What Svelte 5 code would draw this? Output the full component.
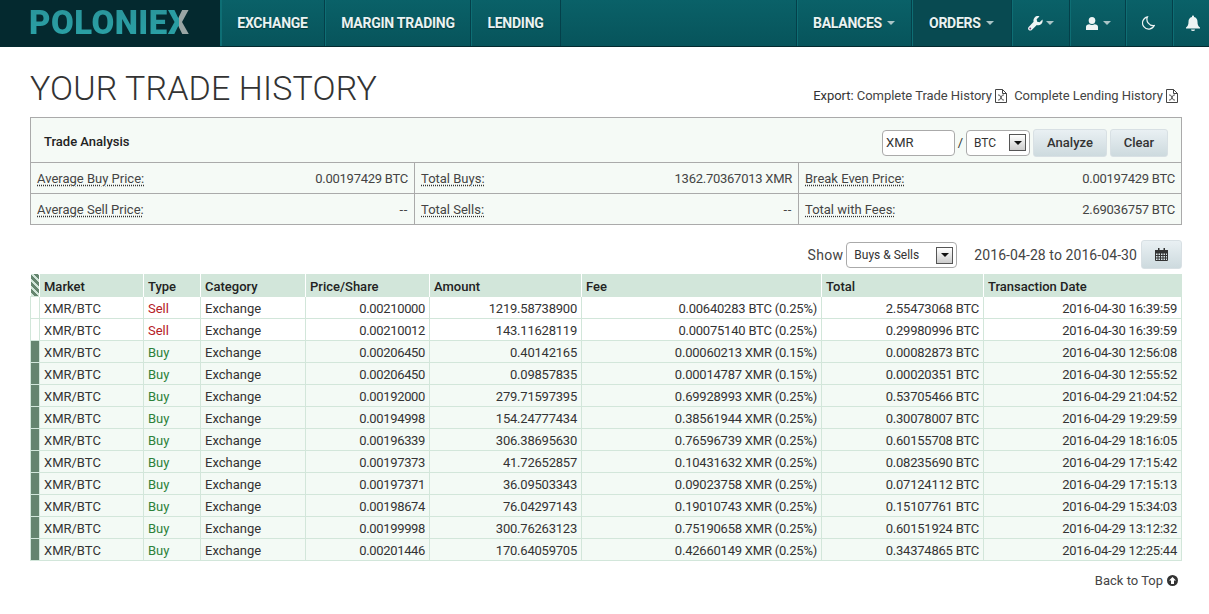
<script>
  const rows = [
    ['Sell','0.00210000','1219.58738900','0.00640283 BTC (0.25%)','2.55473068 BTC','2016-04-30 16:39:59'],
    ['Sell','0.00210012','143.11628119','0.00075140 BTC (0.25%)','0.29980996 BTC','2016-04-30 16:39:59'],
    ['Buy','0.00206450','0.40142165','0.00060213 XMR (0.15%)','0.00082873 BTC','2016-04-30 12:56:08'],
    ['Buy','0.00206450','0.09857835','0.00014787 XMR (0.15%)','0.00020351 BTC','2016-04-30 12:55:52'],
    ['Buy','0.00192000','279.71597395','0.69928993 XMR (0.25%)','0.53705466 BTC','2016-04-29 21:04:52'],
    ['Buy','0.00194998','154.24777434','0.38561944 XMR (0.25%)','0.30078007 BTC','2016-04-29 19:29:59'],
    ['Buy','0.00196339','306.38695630','0.76596739 XMR (0.25%)','0.60155708 BTC','2016-04-29 18:16:05'],
    ['Buy','0.00197373','41.72652857','0.10431632 XMR (0.25%)','0.08235690 BTC','2016-04-29 17:15:42'],
    ['Buy','0.00197371','36.09503343','0.09023758 XMR (0.25%)','0.07124112 BTC','2016-04-29 17:15:13'],
    ['Buy','0.00198674','76.04297143','0.19010743 XMR (0.25%)','0.15107761 BTC','2016-04-29 15:34:03'],
    ['Buy','0.00199998','300.76263123','0.75190658 XMR (0.25%)','0.60151924 BTC','2016-04-29 13:12:32'],
    ['Buy','0.00201446','170.64059705','0.42660149 XMR (0.25%)','0.34374865 BTC','2016-04-29 12:25:44'],
  ];
</script>

{#snippet xls()}
  <svg class="xls" width="12" height="14" viewBox="0 0 12 14"><path d="M.5.500h7l4 4v9H.5z M7.500.500v4h4" fill="#fff" stroke="#444"/><path d="M3 6h1.500l3 5H9M9 6H7.500l-3 5H3" stroke="#444" stroke-width=".9" fill="none"/></svg>
{/snippet}
{#snippet caret()}<i class="caret"></i>{/snippet}
{#snippet arrow()}<span class="arrow"><i></i></span>{/snippet}

<header class="nav">
  <div class="logo"><span class="word">POLONIE</span><span class="x">X</span></div>
  <nav class="group">
    <a href="#e" class="l1">EXCHANGE</a>
    <a href="#m" class="l2">MARGIN TRADING</a>
    <a href="#l" class="l3">LENDING</a>
  </nav>
  <nav class="group right">
    <a href="#b" class="bal">BALANCES {@render caret()}</a>
    <a href="#o" class="ord active">ORDERS {@render caret()}</a>
    <a href="#w" class="ico w1">
      <svg width="15" height="15" viewBox="0 0 16 16"><path d="M15.400 3.600l-3 3-2.600-.6-.6-2.600 3-3c-1.800-.6-3.800-.2-5.100 1.100-1.300 1.300-1.600 3.100-1.100 4.700L.7 11.600c-.9.900-.9 2.400 0 3.300s2.400.9 3.300 0L9.400 9.600c1.600.5 3.400.2 4.800-1.100 1.300-1.300 1.700-3.200 1.200-4.900z" fill="#eef4f4"/><circle cx="2.400" cy="13.300" r="1" fill="#7a3f7a"/></svg>
      {@render caret()}
    </a>
    <a href="#u" class="ico w2">
      <svg width="12" height="13" viewBox="0 0 12 13"><ellipse cx="6" cy="3.500" rx="3.300" ry="3.500" fill="#eef4f4"/><path d="M0 13V9.800C0 8.300 1.500 7.500 3.300 7.300c1.600.8 3.800.8 5.400 0C10.500 7.500 12 8.300 12 9.800V13z" fill="#eef4f4"/></svg>
      {@render caret()}
    </a>
    <a href="#n" class="ico w3">
      <svg width="13" height="14" viewBox="0 0 13 14"><path d="M5.500.8A6.200 6.200 0 1 0 12.300 9.600 6.300 6.300 0 0 1 5.500.8z" fill="none" stroke="#eef4f4" stroke-width="1.200"/></svg>
    </a>
    <a href="#a" class="ico w4">
      <svg width="14" height="16" viewBox="0 0 14 15"><path d="M7 0c.6 0 1 .4 1 1v.5c2.300.5 3.500 2.300 3.500 4.700 0 3 .7 4.300 2.500 5.800v1H0v-1c1.800-1.500 2.500-2.800 2.500-5.800C2.500 3.800 3.700 2 6 1.500V1c0-.6.400-1 1-1z" fill="#eef4f4"/><path d="M5 14a2 1.500 0 0 0 4 0z" fill="#eef4f4"/></svg>
    </a>
  </nav>
</header>

<main>
  <div class="head">
    <h1>YOUR TRADE HISTORY</h1>
    <div class="export">Export: <a href="#t">Complete Trade History</a> {@render xls()}<a class="second" href="#c">Complete Lending History</a> {@render xls()}</div>
  </div>

  <section class="panel">
    <div class="ptitle">
      <strong>Trade Analysis</strong>
      <div class="controls">
        <span class="input">XMR</span>
        <span class="slash">/</span>
        <span class="select s1">BTC{@render arrow()}</span>
        <button class="btn analyze">Analyze</button>
        <button class="btn clear">Clear</button>
      </div>
    </div>
    <div class="stats">
      <div class="stat"><u>Average Buy Price:</u><span>0.00197429 BTC</span></div>
      <div class="stat"><u>Total Buys:</u><span>1362.70367013 XMR</span></div>
      <div class="stat"><u>Break Even Price:</u><span>0.00197429 BTC</span></div>
      <div class="stat"><u>Average Sell Price:</u><span class="dash">--</span></div>
      <div class="stat"><u>Total Sells:</u><span class="dash">--</span></div>
      <div class="stat"><u>Total with Fees:</u><span>2.69036757 BTC</span></div>
    </div>
  </section>

  <div class="filter">
    <span class="show">Show</span>
    <span class="select s2">Buys &amp; Sells{@render arrow()}</span>
    <span class="range">2016-04-28 to 2016-04-30</span>
    <button class="btn cal" aria-label="Pick dates">
      <svg width="13" height="13" viewBox="0 0 13 13"><path d="M.5 2.500h12v10H.5zM.5 5h12M.5 7.500h12M.5 10h12M3 2.500v10M5.500 2.500v10M8 2.500v10M10.500 2.500v10" fill="none" stroke="#333"/><path d="M3 0h1.500v3H3zM8.500 0H10v3H8.500zM0 2h13v3H0z" fill="#333"/></svg>
    </button>
  </div>

  <table>
    <colgroup>
      <col class="c0"/><col class="c1"/><col class="c2"/><col class="c3"/><col class="c4"/><col class="c5"/><col class="c6"/><col class="c7"/><col class="c8"/>
    </colgroup>
    <thead>
      <tr>
        <th class="stripe"></th><th>Market</th><th>Type</th><th>Category</th><th>Price/Share</th><th>Amount</th><th>Fee</th><th>Total</th><th>Transaction Date</th>
      </tr>
    </thead>
    <tbody>
      {#each rows as r}
        <tr class={r[0] === 'Buy' ? 'buy' : 'sell'}>
          <td class="mark"></td>
          <td>XMR/BTC</td>
          <td class="type">{r[0]}</td>
          <td>Exchange</td>
          <td class="num tight">{r[1]}</td>
          <td class="num">{r[2]}</td>
          <td class="num">{r[3]}</td>
          <td class="num">{r[4]}</td>
          <td class="num">{r[5]}</td>
        </tr>
      {/each}
    </tbody>
  </table>

  <div class="top">
    <a href="#top">Back to Top</a>
    <svg width="11" height="11" viewBox="0 0 11 11"><circle cx="5.500" cy="5.500" r="5.500" fill="#333"/><path d="M5.500 2L9 5.600H7V9H4V5.600H2z" fill="#fff"/></svg>
  </div>
</main>

<style>
  :global(body) { margin: 0; background: #fff; font-family: Roboto, "Liberation Sans", sans-serif; color: #333; }
  a { color: inherit; text-decoration: none; }
  .nav { display: flex; justify-content: space-between; height: 46px; border-bottom: 1px solid #032a2f; background: linear-gradient(#0a6168, #07545b); }
  .logo { box-sizing: border-box; width: 221px; padding-left: 29px; flex: none; background: #04292f; font: 900 33px/45px Roboto, sans-serif; letter-spacing: 0.45px; border-right: 1px solid #0e6e74; white-space: nowrap; }
  .logo .word { background: linear-gradient(#2a9399, #2aa3a8); -webkit-background-clip: text; background-clip: text; color: transparent; }
  .logo .x { background: linear-gradient(90deg, #2a9da3 52%, #9aa5a5 52%); -webkit-background-clip: text; background-clip: text; color: transparent; }
  .group { display: flex; margin-right: auto; }
  .group.right { margin-right: 0; border-left: 1px solid #04404a; }
  .group a { display: flex; align-items: center; justify-content: center; box-sizing: border-box; padding: 0; height: 46px; font-size: 14px; font-weight: 700; letter-spacing: -0.25px; color: #eaf2f2; border-right: 1px solid #04404a; box-shadow: inset 1px 0 0 #0e6e74; text-shadow: 0 1px 1px #033; gap: 5px; white-space: nowrap; }
  .group .l1 { width: 104px; }
  .group .l2 { width: 146px; padding-left: 1px; }
  .group .l3 { width: 90px; }
  .group .bal { width: 115px; padding-left: 16px; justify-content: flex-start; }
  .group .ord { width: 100px; padding-left: 17px; justify-content: flex-start; }
  .active { background: #084a51; }
  .group .w1 { width: 58px; padding: 0 0 0 1px; gap: 3px; }
  .group .w2 { width: 56px; padding: 0 0 0 2px; }
  .group .w3 { width: 47px; padding: 0 1px 0 0; }
  .group .w4 { width: 36px; padding: 0 0 0 4px; border-right: 0; }
  .caret { display: inline-block; width: 0; height: 0; border: 4.5px solid transparent; border-top-color: #a9c4c6; border-bottom: 0; }
  main { padding: 0 27px 0 30px; }
  .head { display: flex; justify-content: space-between; align-items: flex-end; height: 70px; }
  h1 { margin: 0 0 8px; font-size: 34px; letter-spacing: 0.12px; line-height: 42px; font-weight: 300; color: #333; }
  .export { font-size: 13px; line-height: 15px; margin-bottom: 14px; color: #333; margin-right: 4px; white-space: nowrap; letter-spacing: -0.04px; }
  .export a { color: #444; }
  .export .second { margin-left: 7px; }
  .xls { vertical-align: -3px; }
  .panel { border: 1px solid #aaa; background: #f5faf6; font-size: 13px; }
  .ptitle { display: flex; justify-content: space-between; align-items: center; box-sizing: border-box; height: 45px; padding: 3px 13px 0; border-bottom: 1px solid #aaa; }
  .ptitle strong { font-weight: 500; font-size: 13px; color: #222; }
  .controls { display: flex; align-items: center; margin-top: 2px; }
  .input { box-sizing: border-box; width: 73px; height: 26px; line-height: 24px; padding-left: 3px; border: 1px solid #aaa; border-radius: 4px; background: #fff; color: #333; font-size: 13px; }
  .slash { width: 11px; text-align: center; }
  .select { display: flex; justify-content: space-between; align-items: center; box-sizing: border-box; height: 26px; border: 1px solid #aaa; border-radius: 4px; background: #fff; padding: 0 3px 0 7px; font-size: 12px; color: #333; }
  .s1 { width: 64px; margin-right: 3px; }
  .s2 { width: 111px; margin-top: 1px; }
  .arrow { box-sizing: border-box; display: flex; align-items: center; justify-content: center; width: 17px; height: 17px; border: 1px solid #555; background: linear-gradient(#fff, #ccc); }
  .arrow i { width: 0; height: 0; border: 4px solid transparent; border-top-color: #111; border-bottom: 0; }
  .btn { box-sizing: border-box; height: 28px; border: 1px solid #d8e0e4; border-radius: 3px; background: linear-gradient(#e9f0f3, #cddade); font: 500 13px Roboto, sans-serif; color: #333; padding: 0; }
  .analyze { width: 74px; margin-right: 3px; }
  .clear { width: 58px; }
  .stats { display: grid; grid-template-columns: 384px 384px 1fr; }
  .stat { display: flex; justify-content: space-between; align-items: center; height: 31px; box-sizing: border-box; padding: 0 6px 0 6px; border-right: 1px solid #aaa; border-bottom: 1px solid #aaa; color: #444; }
  .stat span { letter-spacing: -0.26px; }
  .stat .dash { letter-spacing: 0.6px; }
  .stat:nth-child(n+4) { height: 30px; border-bottom: 0; }
  .stat:nth-child(3n) { border-right: 0; }
  .stat u { text-decoration: underline dotted #333; text-underline-offset: 2px; }
  .filter { display: flex; justify-content: flex-end; align-items: center; box-sizing: border-box; height: 49px; padding: 15px 0 5px; font-size: 14px; color: #444; }
  .show { margin-right: 3px; margin-top: 1px; letter-spacing: 0.3px; }
  .range { margin-left: 17px; margin-right: 4px; letter-spacing: 0.08px; margin-top: 1px; }
  .cal { width: 41px; height: 29px; display: flex; align-items: center; justify-content: center; }
  table { box-sizing: border-box; width: 1151px; table-layout: fixed; border-collapse: collapse; font-size: 13px; }
  .c0 { width: 9px; } .c1 { width: 104px; } .c2 { width: 57px; } .c3 { width: 105px; } .c4 { width: 124px; }
  .c5 { width: 152px; } .c6 { width: 240px; } .c7 { width: 162px; } .c8 { width: 198px; }
  th { box-sizing: border-box; height: 22px; padding: 4px 4px 0; background: #d2e6da; text-align: left; font-weight: 500; color: #222; border-left: 1px solid #fff; }
  th:first-child { border-left: 0; }
  td { height: 22px; box-sizing: border-box; padding: 2px 4px 0; border: 1px solid #d2e6da; color: #333; white-space: nowrap; }
  .buy td { background: #f3faf5; }
  .sell td { background: #fff; }
  .num { text-align: right; letter-spacing: -0.22px; }
  .num.tight { letter-spacing: -0.35px; }
  .sell .type { color: #b52025; }
  .buy .type { color: #2c8139; }
  .buy .mark { background: #65856f; border-color: #d2e6da; }
  .sell .mark { background: #fff; }
  .stripe { padding: 0; background: repeating-linear-gradient(45deg, #d2e6da 0 2.5px, #65856f 2.5px 5px); }
  .top { display: flex; justify-content: flex-end; align-items: center; gap: 4px; margin-top: 12px; padding-right: 4px; font-size: 13px; color: #444; }
</style>
